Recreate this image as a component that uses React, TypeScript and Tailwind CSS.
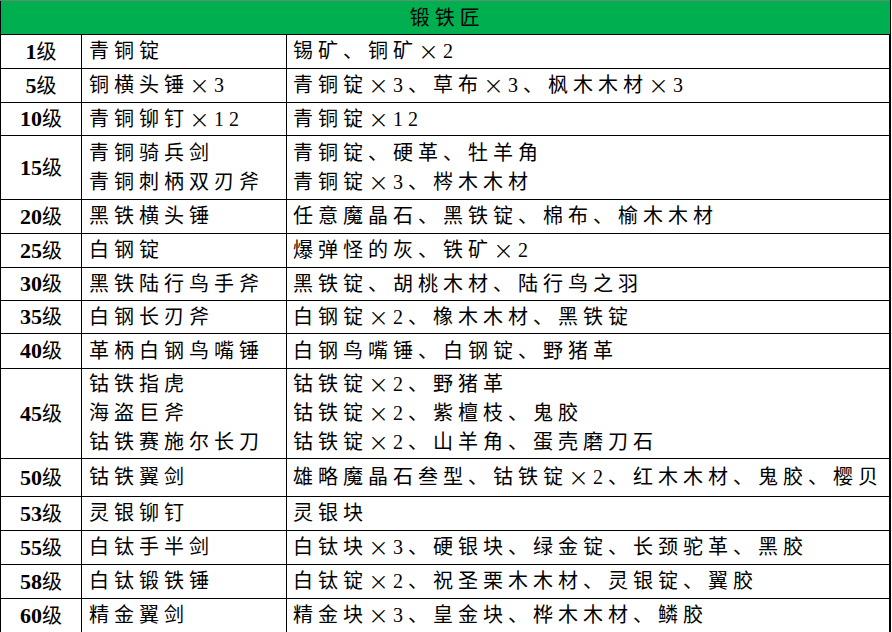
import React from 'react';

type Row = { lv: string; h: string; items: string[]; mats: string[] };

const ROWS: Row[] = [
  { lv: '1', h: 'h-[34px]', items: ['青铜锭'], mats: ['锡矿、铜矿×2'] },
  { lv: '5', h: 'h-[34px]', items: ['铜横头锤×3'], mats: ['青铜锭×3、草布×3、枫木木材×3'] },
  { lv: '10', h: 'h-[33px]', items: ['青铜铆钉×12'], mats: ['青铜锭×12'] },
  { lv: '15', h: 'h-[64px]', items: ['青铜骑兵剑', '青铜刺柄双刃斧'], mats: ['青铜锭、硬革、牡羊角', '青铜锭×3、梣木木材'] },
  { lv: '20', h: 'h-[34px]', items: ['黑铁横头锤'], mats: ['任意魔晶石、黑铁锭、棉布、榆木木材'] },
  { lv: '25', h: 'h-[34px]', items: ['白钢锭'], mats: ['爆弹怪的灰、铁矿×2'] },
  { lv: '30', h: 'h-[33px]', items: ['黑铁陆行鸟手斧'], mats: ['黑铁锭、胡桃木材、陆行鸟之羽'] },
  { lv: '35', h: 'h-[33px]', items: ['白钢长刃斧'], mats: ['白钢锭×2、橡木木材、黑铁锭'] },
  { lv: '40', h: 'h-[35px]', items: ['革柄白钢鸟嘴锤'], mats: ['白钢鸟嘴锤、白钢锭、野猪革'] },
  {
    lv: '45',
    h: 'h-[90px]',
    items: ['钴铁指虎', '海盗巨斧', '钴铁赛施尔长刀'],
    mats: ['钴铁锭×2、野猪革', '钴铁锭×2、紫檀枝、鬼胶', '钴铁锭×2、山羊角、蛋壳磨刀石'],
  },
  { lv: '50', h: 'h-[38px]', items: ['钴铁翼剑'], mats: ['雄略魔晶石叁型、钴铁锭×2、红木木材、鬼胶、樱贝'] },
  { lv: '53', h: 'h-[34px]', items: ['灵银铆钉'], mats: ['灵银块'] },
  { lv: '55', h: 'h-[34px]', items: ['白钛手半剑'], mats: ['白钛块×3、硬银块、绿金锭、长颈驼革、黑胶'] },
  { lv: '58', h: 'h-[34px]', items: ['白钛锻铁锤'], mats: ['白钛锭×2、祝圣栗木木材、灵银锭、翼胶'] },
  { lv: '60', h: 'h-[34px]', items: ['精金翼剑'], mats: ['精金块×3、皇金块、桦木木材、鳞胶'] },
];

// × is drawn full width in the source sheet
const Txt = ({ s }: { s: string }) => {
  const parts = s.split('×');
  return (
    <>
      {parts.map((p, i) => (
        <React.Fragment key={i}>
          {i > 0 && (
            <span className="inline-block w-[20px] mr-[5px] text-center tracking-normal text-[25px] leading-[20px] font-['DejaVu_Sans',sans-serif] font-extralight align-[-2px]">
              ×
            </span>
          )}
          {p}
        </React.Fragment>
      ))}
    </>
  );
};

export default function App() {
  return (
    <div className="w-[892px] h-[632px] bg-white overflow-hidden">
      <table
        className="w-[891px] border-collapse table-fixed text-[20px] text-black tracking-[5px]"
        style={{ fontFamily: '"Liberation Serif", "Noto Sans CJK SC", serif' }}
      >
        <colgroup>
          <col className="w-[81px]" />
          <col className="w-[205px]" />
          <col />
        </colgroup>
        <thead>
          <tr className="h-[34px]">
            <th
              colSpan={3}
              className="bg-[#00b050] border border-black border-t-[#5f8f6f] font-normal text-center leading-none p-0 pl-[4px]"
            >
              锻铁匠
            </th>
          </tr>
        </thead>
        <tbody>
          {ROWS.map((r) => (
            <tr key={r.lv} className={r.h}>
              <td className="border border-black text-center align-middle p-0 leading-[29px] tracking-normal">
                <span className="font-bold text-[22px]">{r.lv}</span>级
              </td>
              <td className="border border-black align-middle pl-[7px] pr-0 py-0 leading-[29px] whitespace-nowrap">
                {r.items.map((t) => (
                  <div key={t}>
                    <Txt s={t} />
                  </div>
                ))}
              </td>
              <td className="border border-black border-r-2 align-middle pl-[6px] pr-0 py-0 leading-[29px] whitespace-nowrap">
                {r.mats.map((t) => (
                  <div key={t}>
                    <Txt s={t} />
                  </div>
                ))}
              </td>
            </tr>
          ))}
        </tbody>
      </table>
    </div>
  );
}
